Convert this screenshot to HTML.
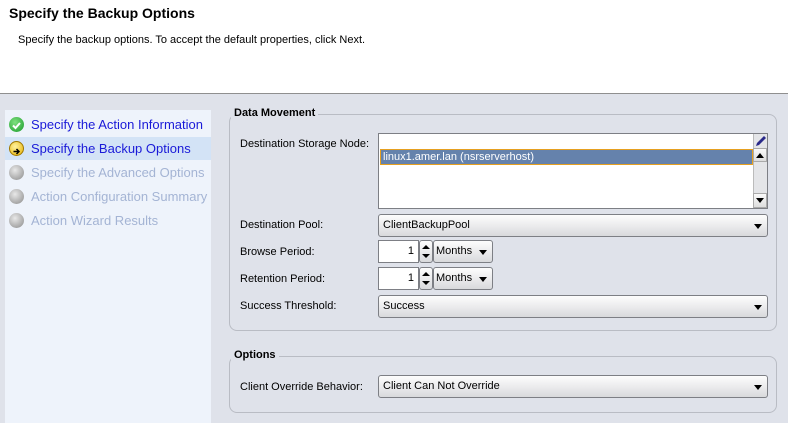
<!DOCTYPE html>
<html><head><style>
*{margin:0;padding:0;box-sizing:border-box}
body{width:788px;height:423px;overflow:hidden;background:#dfe2ea;font-family:"Liberation Sans",Arial,sans-serif;font-size:11px;color:#000;position:relative}
.abs{position:absolute}
.hdr{left:0;top:0;width:788px;height:94px;background:#fff;border-bottom:1px solid #8f8f8f}
.nav{left:5px;top:110px;width:206px;height:313px;background:#eef3fb}
.item{position:absolute;left:0;width:206px;height:23px;font-size:13px;line-height:23px;padding-left:26px}
.ic{position:absolute;left:4px;top:4px;width:15px;height:15px;border-radius:50%}
.fs{border:1px solid #b9bcc4;border-radius:8px}
.lg{background:#dfe2ea;font-weight:bold;padding:0 3px;font-size:11px}
.combo{border:1px solid #7d7f85;border-radius:3px;background:linear-gradient(#fdfdfd,#e8e8ea 60%,#d8d9dc);height:23px;line-height:21px;padding-left:4px}
.arr{position:absolute;right:5px;top:9px;width:0;height:0;border-left:4px solid transparent;border-right:4px solid transparent;border-top:5px solid #000}
.lbl{position:absolute;left:240px}
</style></head><body>
<div class="abs hdr"></div>
<div class="abs" style="left:9px;top:5px;font-size:14px;font-weight:bold">Specify the Backup Options</div>
<div class="abs" style="left:18px;top:34px">Specify the backup options. To accept the default properties, click Next.</div>

<div class="abs nav">
 <div class="item" style="top:3px;color:#1a1ad8"><span class="ic" style="background:radial-gradient(circle at 40% 35%,#7fe07f,#1a9a2a);"><svg width="15" height="15"><path d="M4 7.5l2.5 2.5 4.5-5" stroke="#fff" stroke-width="2" fill="none"/></svg></span>Specify the Action Information</div>
 <div class="item" style="top:27px;background:#d3e3f6;color:#1a1ad8"><span class="ic" style="background:radial-gradient(circle at 40% 35%,#fff3a0,#e6b000);border:1px solid #a07800"><svg width="13" height="13"><path d="M3.5 6.5h5M6.5 4l2.5 2.5L6.5 9" stroke="#000" stroke-width="1.5" fill="none"/></svg></span>Specify the Backup Options</div>
 <div class="item" style="top:51px;color:#a4b4d4"><span class="ic" style="background:radial-gradient(circle at 40% 35%,#e8e8e8,#8a8a8a)"></span>Specify the Advanced Options</div>
 <div class="item" style="top:75px;color:#a4b4d4"><span class="ic" style="background:radial-gradient(circle at 40% 35%,#e8e8e8,#8a8a8a)"></span>Action Configuration Summary</div>
 <div class="item" style="top:99px;color:#a4b4d4"><span class="ic" style="background:radial-gradient(circle at 40% 35%,#e8e8e8,#8a8a8a)"></span>Action Wizard Results</div>
</div>

<div class="abs fs" style="left:229px;top:114px;width:548px;height:217px"></div>
<div class="abs lg" style="left:231px;top:107px">Data Movement</div>
<div class="abs fs" style="left:229px;top:356px;width:548px;height:57px"></div>
<div class="abs lg" style="left:231px;top:349px">Options</div>

<div class="lbl" style="top:138px">Destination Storage Node:</div>
<div class="abs" style="left:378px;top:133px;width:390px;height:76px;background:#fff;border:1px solid #7d7f85">
 <div class="abs" style="left:1px;top:15px;width:373px;height:16px;background:#6582ac;border:1px solid #e6a020;color:#fff;line-height:14px;padding-left:2px">linux1.amer.lan (nsrserverhost)</div>
 <div class="abs" style="left:374px;top:0;width:14px;height:74px;background:#e4e5e8;border-left:1px solid #bbb"></div>
 <div class="abs" style="left:374px;top:14px;width:14px;height:14px;background:linear-gradient(#fafafa,#ddd);border:1px solid #aaa"><div class="abs" style="left:2px;top:4px;border-left:4px solid transparent;border-right:4px solid transparent;border-bottom:5px solid #000"></div></div>
 <div class="abs" style="left:374px;top:59px;width:14px;height:15px;background:linear-gradient(#fafafa,#ddd);border:1px solid #aaa"><div class="abs" style="left:2px;top:4px;border-left:4px solid transparent;border-right:4px solid transparent;border-top:5px solid #000"></div></div>
 <svg class="abs" style="left:374px;top:0" width="14" height="14"><path d="M3 12l1-3 7-7 2 2-7 7z" fill="#2a2a8a"/></svg>
</div>

<div class="lbl" style="top:219px">Destination Pool:</div>
<div class="abs combo" style="left:378px;top:214px;width:390px">ClientBackupPool<span class="arr"></span></div>

<div class="lbl" style="top:246px">Browse Period:</div>
<div class="abs" style="left:378px;top:240px;width:41px;height:23px;background:#fff;border:1px solid #7d7f85;text-align:right;padding-right:4px;line-height:21px">1</div>
<div class="abs combo" style="left:419px;top:240px;width:14px;padding:0"><div class="abs" style="left:2px;top:4px;border-left:4px solid transparent;border-right:4px solid transparent;border-bottom:4px solid #000"></div><div class="abs" style="left:2px;top:13px;border-left:4px solid transparent;border-right:4px solid transparent;border-top:4px solid #000"></div></div>
<div class="abs combo" style="left:433px;top:240px;width:60px;padding-left:2px">Months<span class="arr"></span></div>

<div class="lbl" style="top:273px">Retention Period:</div>
<div class="abs" style="left:378px;top:267px;width:41px;height:23px;background:#fff;border:1px solid #7d7f85;text-align:right;padding-right:4px;line-height:21px">1</div>
<div class="abs combo" style="left:419px;top:267px;width:14px;padding:0"><div class="abs" style="left:2px;top:4px;border-left:4px solid transparent;border-right:4px solid transparent;border-bottom:4px solid #000"></div><div class="abs" style="left:2px;top:13px;border-left:4px solid transparent;border-right:4px solid transparent;border-top:4px solid #000"></div></div>
<div class="abs combo" style="left:433px;top:267px;width:60px;padding-left:2px">Months<span class="arr"></span></div>

<div class="lbl" style="top:300px">Success Threshold:</div>
<div class="abs combo" style="left:378px;top:295px;width:390px">Success<span class="arr"></span></div>

<div class="lbl" style="top:381px">Client Override Behavior:</div>
<div class="abs combo" style="left:378px;top:375px;width:390px">Client Can Not Override<span class="arr"></span></div>
</body></html>
